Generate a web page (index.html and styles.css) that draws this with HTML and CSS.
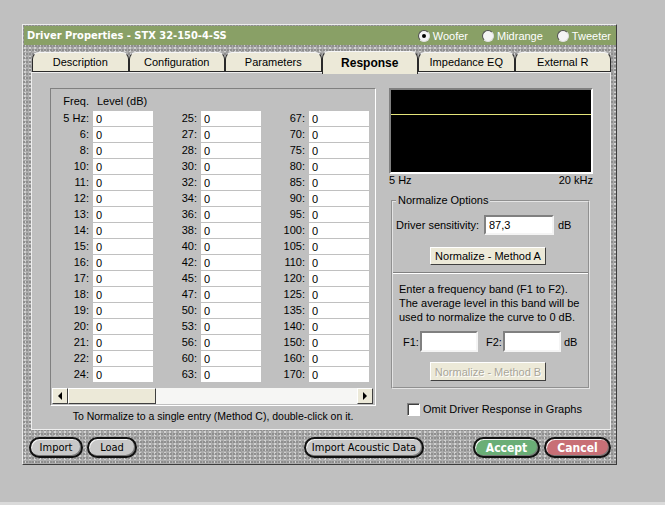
FILE: index.html
```html
<!DOCTYPE html>
<html lang="en">
<head>
  <meta charset="UTF-8">
  <title>Driver Properties</title>
  <link rel="stylesheet" href="styles.css">
</head>
<body>
  <article class="window">
    <header class="titleBar">
      <span class="title">Driver Properties - STX 32-150-4-SS</span>
      <div class="typeRadios">
        <span class="radioItem"><span class="radio checked"></span>Woofer</span>
        <span class="radioItem"><span class="radio"></span>Midrange</span>
        <span class="radioItem"><span class="radio"></span>Tweeter</span>
      </div>
    </header>

    <section class="frameBody">
      <nav class="tabRow">
        <span class="tab">Description</span>
        <span class="tab">Configuration</span>
        <span class="tab">Parameters</span>
        <span class="tab active">Response</span>
        <span class="tab">Impedance EQ</span>
        <span class="tab">External R</span>
      </nav>

      <section class="panel">
        <div class="leftCol">
          <div class="freqBox">
            <div class="freqGrid">
              <span class="headFreq">Freq.</span><span class="headLevel">Level (dB)</span>
              <span class="rowLabel">5 Hz:</span><input class="cellInput" value="0"><span class="rowLabel">25:</span><input class="cellInput" value="0"><span class="rowLabel">67:</span><input class="cellInput" value="0">
              <span class="rowLabel">6:</span><input class="cellInput" value="0"><span class="rowLabel">27:</span><input class="cellInput" value="0"><span class="rowLabel">70:</span><input class="cellInput" value="0">
              <span class="rowLabel">8:</span><input class="cellInput" value="0"><span class="rowLabel">28:</span><input class="cellInput" value="0"><span class="rowLabel">75:</span><input class="cellInput" value="0">
              <span class="rowLabel">10:</span><input class="cellInput" value="0"><span class="rowLabel">30:</span><input class="cellInput" value="0"><span class="rowLabel">80:</span><input class="cellInput" value="0">
              <span class="rowLabel">11:</span><input class="cellInput" value="0"><span class="rowLabel">32:</span><input class="cellInput" value="0"><span class="rowLabel">85:</span><input class="cellInput" value="0">
              <span class="rowLabel">12:</span><input class="cellInput" value="0"><span class="rowLabel">34:</span><input class="cellInput" value="0"><span class="rowLabel">90:</span><input class="cellInput" value="0">
              <span class="rowLabel">13:</span><input class="cellInput" value="0"><span class="rowLabel">36:</span><input class="cellInput" value="0"><span class="rowLabel">95:</span><input class="cellInput" value="0">
              <span class="rowLabel">14:</span><input class="cellInput" value="0"><span class="rowLabel">38:</span><input class="cellInput" value="0"><span class="rowLabel">100:</span><input class="cellInput" value="0">
              <span class="rowLabel">15:</span><input class="cellInput" value="0"><span class="rowLabel">40:</span><input class="cellInput" value="0"><span class="rowLabel">105:</span><input class="cellInput" value="0">
              <span class="rowLabel">16:</span><input class="cellInput" value="0"><span class="rowLabel">42:</span><input class="cellInput" value="0"><span class="rowLabel">110:</span><input class="cellInput" value="0">
              <span class="rowLabel">17:</span><input class="cellInput" value="0"><span class="rowLabel">45:</span><input class="cellInput" value="0"><span class="rowLabel">120:</span><input class="cellInput" value="0">
              <span class="rowLabel">18:</span><input class="cellInput" value="0"><span class="rowLabel">47:</span><input class="cellInput" value="0"><span class="rowLabel">125:</span><input class="cellInput" value="0">
              <span class="rowLabel">19:</span><input class="cellInput" value="0"><span class="rowLabel">50:</span><input class="cellInput" value="0"><span class="rowLabel">135:</span><input class="cellInput" value="0">
              <span class="rowLabel">20:</span><input class="cellInput" value="0"><span class="rowLabel">53:</span><input class="cellInput" value="0"><span class="rowLabel">140:</span><input class="cellInput" value="0">
              <span class="rowLabel">21:</span><input class="cellInput" value="0"><span class="rowLabel">56:</span><input class="cellInput" value="0"><span class="rowLabel">150:</span><input class="cellInput" value="0">
              <span class="rowLabel">22:</span><input class="cellInput" value="0"><span class="rowLabel">60:</span><input class="cellInput" value="0"><span class="rowLabel">160:</span><input class="cellInput" value="0">
              <span class="rowLabel">24:</span><input class="cellInput" value="0"><span class="rowLabel">63:</span><input class="cellInput" value="0"><span class="rowLabel">170:</span><input class="cellInput" value="0">
            </div>
            <div class="hScroll">
              <span class="scrollArrow"><span class="arrowLeft"></span></span>
              <span class="scrollThumb"></span>
              <span class="scrollTrack"></span>
              <span class="scrollArrow"><span class="arrowRight"></span></span>
            </div>
          </div>
          <p class="hint">To Normalize to a single entry (Method C), double-click on it.</p>
        </div>

        <div class="rightCol">
          <div class="graph"><div class="graphLine"></div></div>
          <div class="graphAxis"><span>5 Hz</span><span>20 kHz</span></div>

          <fieldset class="normGroup">
            <legend>Normalize Options</legend>
            <div class="sensRow">
              <label for="sens" class="sensLabel">Driver sensitivity:</label>
              <input id="sens" class="sunkenInput sensInput" value="87,3">
              <span>dB</span>
            </div>
            <div class="btnRow methodA">
              <button class="winBtn">Normalize - Method A</button>
            </div>
            <div class="etchLine"></div>
            <p class="bandText">Enter a frequency band (F1 to F2).<br>The average level in this band will be<br>used to normalize the curve to 0 dB.</p>
            <div class="bandRow">
              <label for="f1" class="bandLabel">F1:</label>
              <input id="f1" class="sunkenInput bandInput">
              <label for="f2" class="bandLabel f2Label">F2:</label>
              <input id="f2" class="sunkenInput bandInput">
              <span class="bandUnit">dB</span>
            </div>
            <div class="btnRow methodB">
              <button class="winBtn" disabled>Normalize - Method B</button>
            </div>
          </fieldset>

          <label class="omitRow"><span class="checkBox"></span>Omit Driver Response in Graphs</label>
        </div>
      </section>

      <footer class="bottomBar">
        <button class="pillBtn importBtn">Import</button>
        <button class="pillBtn loadBtn">Load</button>
        <button class="pillBtn acousticBtn">Import Acoustic Data</button>
        <button class="pillBtn acceptBtn">Accept</button>
        <button class="pillBtn cancelBtn">Cancel</button>
      </footer>
    </section>
  </article>
</body>
</html>
```

FILE: styles.css
```css
* {
  box-sizing: border-box;
}

html {
  background-color: #dadada;
}

body {
  margin: 0;
  height: 502px;
  overflow: hidden;
  background-color: #c0c0c0;
  font-family: "Liberation Sans", Arial, sans-serif;
  font-size: 11px;
  color: #000;
}

p {
  margin: 0;
}

.window {
  width: 595px;
  margin: 24px 0 0 22px;
  border: 1px solid;
  border-color: #ececec #3c3c3c #3c3c3c #ececec;
  background-color: #acacac;
  background-image:
    radial-gradient(circle at 1px 1px, #8e8e8e 0.7px, transparent 1.1px),
    radial-gradient(circle at 2px 2px, #d2d2d2 0.7px, transparent 1.1px),
    radial-gradient(circle at 1px 2px, #9a9a9a 0.6px, transparent 1px);
  background-size: 3px 4px, 5px 3px, 7px 5px;
}

/* title bar */
.titleBar {
  display: flex;
  align-items: center;
  height: 19px;
  margin: 1px 0 0 1px;
  background-color: #89a066;
  color: #fff;
}

.title {
  flex: 1;
  padding-left: 3px;
  font-family: "DejaVu Sans", sans-serif;
  font-stretch: condensed;
  font-weight: bold;
  font-size: 11px;
}

.typeRadios {
  display: flex;
  gap: 14px;
  padding-right: 5px;
}

.radioItem {
  display: flex;
  align-items: center;
  gap: 3px;
  font-size: 11px;
}

.radio {
  width: 12px;
  height: 12px;
  border-radius: 50%;
  border: 1px solid;
  border-color: #505050 #e0e0e0 #e0e0e0 #505050;
  background-color: #f4f4f4;
  display: flex;
  align-items: center;
  justify-content: center;
}

.radio.checked::after {
  content: "";
  width: 4px;
  height: 4px;
  border-radius: 50%;
  background-color: #000;
}

.frameBody {
  padding: 7px 5px 6px 8px;
}

/* tabs */
.tabRow {
  display: flex;
  align-items: flex-end;
  height: 20px;
  padding-left: 1px;
}

.tab {
  flex: 1;
  height: 20px;
  border: 1px solid #2a2a2a;
  border-top-color: #f6f6f6;
  border-radius: 7px 7px 0 0;
  background-color: #ece9d8;
  text-align: center;
  line-height: 18px;
}

.tab.active {
  position: relative;
  z-index: 1;
  height: 23px;
  margin-bottom: -2px;
  border-bottom: 0;
  font-weight: bold;
  font-size: 12px;
  line-height: 22px;
}

/* panel */
.panel {
  display: flex;
  gap: 13px;
  height: 358px;
  padding: 15px 0 0 18px;
  border: 1px solid #eeeeee;
  background-color: #c0c0c0;
}

.leftCol {
  width: 326px;
}

.freqBox {
  height: 318px;
  padding-top: 6px;
  border: 1px solid;
  border-color: #808080 #ffffff #ffffff #808080;
}

.freqGrid {
  display: grid;
  grid-template-columns: 34px 60px 40px 60px 40px 60px;
  grid-template-rows: 15px;
  grid-auto-rows: 15px;
  column-gap: 4px;
  row-gap: 1px;
  padding-left: 4px;
}

.headFreq, .rowLabel {
  text-align: right;
  line-height: 15px;
}

.headFreq, .headLevel {
  line-height: 13px;
}

.headLevel {
  grid-column: 2 / 7;
  padding-left: 4px;
}

.cellInput {
  width: 60px;
  height: 15px;
  margin: 0;
  padding: 0 0 0 3px;
  border: 0;
  background-color: #fff;
  font: 11px "Liberation Sans", Arial, sans-serif;
}

.hScroll {
  display: flex;
  height: 16px;
  margin: 6px 2px 0 1px;
  background-color: #f6f6f4;
}

.scrollArrow, .scrollThumb {
  display: flex;
  align-items: center;
  justify-content: center;
  border: 1px solid;
  border-color: #ffffff #404040 #404040 #ffffff;
  background-color: #ece9d8;
}

.scrollArrow {
  width: 16px;
}

.scrollThumb {
  width: 88px;
}

.scrollTrack {
  flex: 1;
}

.arrowLeft {
  border: 4px solid transparent;
  border-left: 0;
  border-right-color: #000;
}

.arrowRight {
  border: 4px solid transparent;
  border-right: 0;
  border-left-color: #000;
}

.hint {
  margin-top: 4px;
  text-align: center;
  line-height: 13px;
  font-size: 10.5px;
}

/* right column */
.rightCol {
  width: 204px;
}

.graph {
  height: 86px;
  border: 2px solid;
  border-color: #808080 #ffffff #ffffff #808080;
  background-color: #000;
}

.graphLine {
  height: 1px;
  margin-top: 24px;
  background-color: #e4e47a;
}

.graphAxis {
  display: flex;
  justify-content: space-between;
  height: 13px;
  line-height: 13px;
}

.normGroup {
  margin: 7px 3px 0 2px;
  padding: 0 0 6px;
  border: 2px groove #e4e4e4;
}

.normGroup legend {
  margin-left: 3px;
  padding: 0 2px;
  line-height: 13px;
}

.sensRow {
  display: flex;
  align-items: center;
  margin-top: 8px;
  padding-left: 3px;
}

.sensLabel {
  width: 88px;
}

.sunkenInput {
  margin: 0;
  border: 2px solid;
  border-color: #808080 #f4f4f4 #f4f4f4 #808080;
  background-color: #fff;
  font: 11px "Liberation Sans", Arial, sans-serif;
  padding: 0 0 0 3px;
}

.sensInput {
  width: 70px;
  height: 20px;
  margin-right: 4px;
}

.btnRow {
  display: flex;
  padding-left: 37px;
}

.methodA {
  margin-top: 12px;
}

.methodB {
  margin-top: 10px;
}

.winBtn {
  width: 116px;
  height: 19px;
  padding: 0;
  border: 1px solid;
  border-color: #ffffff #404040 #404040 #ffffff;
  background-color: #ece9d8;
  font: 11px "Liberation Sans", Arial, sans-serif;
  color: #000;
}

.methodA .winBtn {
  height: 18px;
}

.winBtn:disabled {
  color: #a9a69a;
  text-shadow: 1px 1px 0 #fff;
}

.etchLine {
  margin-top: 7px;
  border-top: 1px solid #808080;
  border-bottom: 1px solid #ffffff;
}

.bandText {
  padding: 8px 0 0 6px;
  line-height: 14px;
}

.bandRow {
  display: flex;
  align-items: center;
  margin-top: 7px;
  padding-left: 10px;
}

.bandLabel {
  width: 17px;
}

.f2Label {
  margin-left: 8px;
}

.bandInput {
  width: 58px;
  height: 21px;
}

.bandUnit {
  margin-left: 3px;
}

.omitRow {
  display: flex;
  align-items: center;
  gap: 3px;
  margin-top: 14px;
  padding-left: 18px;
  line-height: 13px;
}

.checkBox {
  width: 13px;
  height: 13px;
  border: 1px solid;
  border-color: #808080 #ffffff #ffffff #808080;
  background-color: #fff;
  box-shadow: inset 1px 1px 0 #404040;
}

/* bottom buttons */
.bottomBar {
  display: flex;
  gap: 4px;
  height: 21px;
  margin: 7px 0 0 -2px;
}

.pillBtn {
  height: 21px;
  padding: 0;
  border: 2px solid #111;
  border-radius: 11px;
  background-color: #c8c8c8;
  box-shadow: inset 1px 1px 0 #f2f2f2, inset -1px -1px 0 #787878;
  font-family: "DejaVu Sans", sans-serif;
  font-stretch: condensed;
  font-size: 11px;
  color: #000;
}

.importBtn {
  width: 54px;
}

.loadBtn {
  width: 50px;
}

.acousticBtn {
  width: 120px;
  margin-left: 163px;
}

.acceptBtn, .cancelBtn {
  width: 67px;
  font-weight: bold;
  font-size: 12px;
  color: #fff;
}

.acceptBtn {
  margin-left: auto;
  background-color: #6aae76;
}

.cancelBtn {
  background-color: #c86f76;
}
```
